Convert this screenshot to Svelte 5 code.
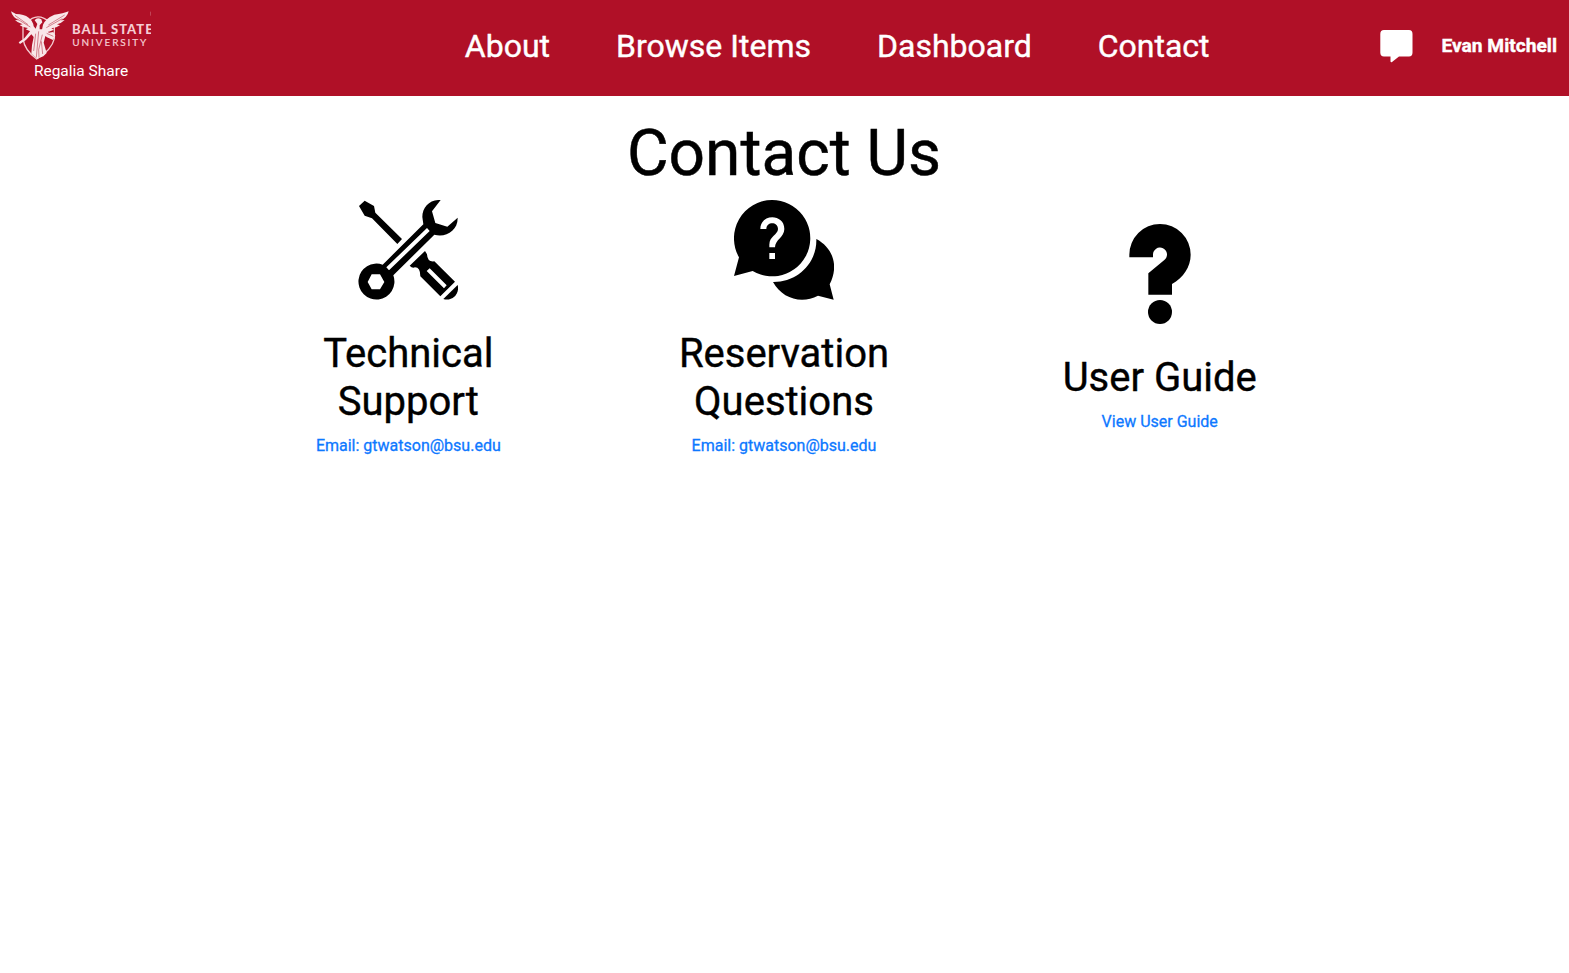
<script>
  const links = ['About', 'Browse Items', 'Dashboard', 'Contact'];
</script>

<header>
  <div class="brand">
    <svg class="logo" width="140" height="52" viewBox="33 31 420 156" role="img" aria-label="Ball State University">
      <path class="shield" d="M69 78V117Q74 153 110 178Q155 151 163 117V78M80 70Q112 34 151 69" />
      <path class="wing" d="M33 35L48 43Q72 43 86 54Q99 63 101 80L112 93L103 101Q88 94 77 89L84 85Q66 82 59 76L68 74Q52 69 45 61L57 62Q37 53 33 35Z" />
      <path class="wing" d="M206 35Q202 53 182 62L194 61Q185 70 171 74L180 77Q171 84 154 86L162 90Q149 97 135 98L126 90L129 75Q137 56 163 45Q190 42 206 35Z" />
      <path class="wing" d="M104 62Q111 51 124 59L127 68L119 77L119 89L132 89Q145 92 146 99L160 97L166 108L159 121L141 113L136 109L131 129L140 160L130 170L112 177L94 162L96 137L101 112L94 104L78 121L60 133L56 128L73 116L93 91L107 87L112 73Z" />
      <path class="fold" d="M107 102L101 154M116 95L109 173M127 105L116 150L117 174M124 125L128 163M45 47L84 75M50 57L91 82M194 46L145 76M187 57L139 84M140 101L160 110" />
      <text class="ball" x="216" y="104" textLength="242">BALL STATE</text>
      <text class="uni" x="217" y="139" textLength="222">UNIVERSITY</text>
      <path class="edge" d="M452 36V48" />
    </svg>
    <span>Regalia Share</span>
  </div>
  <nav>
    {#each links as link}<a href="#top">{link}</a>{/each}
  </nav>
  <div class="account">
    <svg width="33" height="33" viewBox="0 0 33 33"><path fill="#fff" d="M4 0H29Q32.500 0 32.500 4V22.500Q32.500 26.500 29 26.500H19L12 32Q10.500 33 10.500 31V26.500H4Q.3 26.500 .3 22.500V4Q.3 0 4 0Z" /></svg>
    <strong>Evan Mitchell</strong>
  </div>
</header>

<main>
  <h1>Contact Us</h1>
  <div class="cards">
    <section>
      <svg width="100" height="100" viewBox="24 24 300 300">
        <path d="M44 26L72 42L76 62L156 141L142 156L66 79L44 71L27 42Z" />
        <path fill-rule="evenodd" d="M272 24C240 22 217 45 217 75L220 97L98 218A54 54 0 1 0 130 250L253 128C287 138 324 116 323 77L292 104L256 93L246 58ZM65 247H90L103 270L90 292H65L53 270ZM109 226L117 235L239 117L231 108Z" />
        <path fill-rule="evenodd" d="M225 177L179 221Q187 230 195 226Q211 226 211 253L271 313L315 269L253 208Q232 211 231 187ZM230 237L239 229L290 280L282 289Z" />
        <path d="M323 279L280 321C306 329 330 305 323 279Z" />
      </svg>
      <h2>Technical Support</h2>
      <a href="#email">Email: gtwatson@bsu.edu</a>
    </section>
    <section>
      <svg width="100" height="100" viewBox="24 24 300 300">
        <path fill-rule="evenodd" d="M138 24A114.500 114.500 0 1 1 80 237L24 252L39 196A115 115 0 0 1 138 24ZM103 111H121C121 88 156 88 156 111C156 128 130 132 130 158V166H147C147 143 175 136 175 111C175 64 103 64 103 111ZM130 183H147V201H130Z" />
        <path d="M271 141C322 168 339 223 311 277L323 323L276 311C227 337 168 320 141 270C214 271 273 214 271 141Z" />
      </svg>
      <h2>Reservation Questions</h2>
      <a href="#email">Email: gtwatson@bsu.edu</a>
    </section>
    <section>
      <svg width="100" height="100" viewBox="30 42 300 300">
        <path d="M88 142V134A92 92 0 0 1 272 134C272 171 250 202 216 222V254H145V190L193 150A21 21 0 1 0 159 134V142Z" />
        <circle cx="180" cy="306" r="36" />
      </svg>
      <h2>User Guide</h2>
      <a href="#guide">View User Guide</a>
    </section>
  </div>
</main>

<style>
  :global(body) { background: #fff; color: #000; font-family: Roboto, sans-serif; }
  header { box-sizing: border-box; height: 96px; background: #b01027; display: flex; justify-content: space-between; align-items: flex-start; color: #fff; padding: 10px 12px 0 11px; }
  a { text-decoration: none; }
  .brand { width: 140px; display: flex; flex-direction: column; align-items: center; font-size: 15.500px; line-height: 18px; }
  .logo { display: block; overflow: hidden; }
  .shield { fill: none; stroke: #f4cbd0; stroke-width: 4; }
  .wing { fill: #f9e7e9; }
  .fold { fill: none; stroke: #c04b5c; stroke-width: 2; }
  .edge { stroke: #cf6c7c; stroke-width: 2; }
  text { fill: #f6cdd3; font-family: Lato, sans-serif; }
  .ball { font-size: 39px; font-weight: 900; }
  .uni { font-size: 30px; font-weight: 400; stroke: #f6cdd3; stroke-width: .6; }
  nav { display: flex; gap: 66px; padding: 17px 0 0 143px; font-size: 32px; line-height: 38px; }
  nav a { color: #fff; -webkit-text-stroke: .4px #fff; }
  .account { display: flex; align-items: center; gap: 28px; padding-top: 20px; }
  .account strong { font-size: 19.200px; line-height: 30px; -webkit-text-stroke: .4px #fff; position: relative; top: -1px; }
  main { padding-top: 19px; }
  h1 { margin: 0; text-align: center; font-size: 64px; line-height: 77px; font-weight: 400; -webkit-text-stroke: .5px #000; position: relative; left: -.5px; }
  .cards { display: flex; justify-content: center; align-items: center; padding: 8px 1px 0 0; }
  section { width: 375.700px; display: flex; flex-direction: column; align-items: center; }
  section svg { display: block; }
  h2 { margin: 30px 0 8px; width: 230px; text-align: center; font-size: 40px; line-height: 48px; font-weight: 400; -webkit-text-stroke: .4px #000; }
  section a { color: #0d78ff; font-size: 16px; line-height: 24px; -webkit-text-stroke: .3px #0d78ff; }
</style>
